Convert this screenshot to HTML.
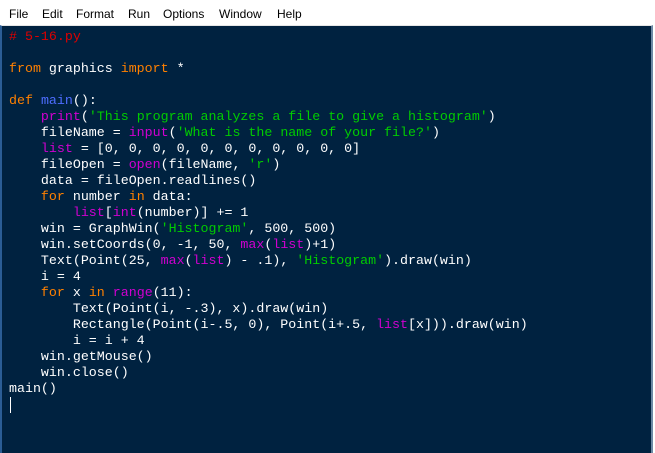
<!DOCTYPE html>
<html><head><style>
body{margin:0;width:655px;height:453px;overflow:hidden;background:#fff;position:relative}
.menu{position:absolute;top:0;left:0;width:655px;height:24px;background:#fff;font-family:"Liberation Sans",sans-serif;font-size:12px;color:#000}
.menu span{position:absolute;top:7px}
.ed{position:absolute;top:25px;left:0;width:653px;height:428px;background:#002240;border-top:1px solid #e6e6e6;border-right:2px solid #6d8aa5;border-left:2px solid #2b5d95;box-sizing:border-box}
pre{margin:0;position:absolute;left:7px;top:3px;font-family:"Liberation Mono",monospace;font-size:13.3px;line-height:16px;color:#fff}
.k{color:#ff8000}.s{color:#00cc00}.b{color:#d000d0}.c{color:#dd0000}.f{color:#4d6dff}
.cur{position:absolute;left:8px;top:371px;width:1px;height:16px;background:#fff}
</style></head><body>
<div class="menu"><span style="left:9px">File</span><span style="left:42px">Edit</span><span style="left:76px">Format</span><span style="left:128px">Run</span><span style="left:163px">Options</span><span style="left:219px">Window</span><span style="left:277px">Help</span></div>
<div class="ed"><pre><span class="c"># 5-16.py</span>

<span class="k">from</span> graphics <span class="k">import</span> *

<span class="k">def</span> <span class="f">main</span>():
    <span class="b">print</span>(<span class="s">'This program analyzes a file to give a histogram'</span>)
    fileName = <span class="b">input</span>(<span class="s">'What is the name of your file?'</span>)
    <span class="b">list</span> = [0, 0, 0, 0, 0, 0, 0, 0, 0, 0, 0]
    fileOpen = <span class="b">open</span>(fileName, <span class="s">'r'</span>)
    data = fileOpen.readlines()
    <span class="k">for</span> number <span class="k">in</span> data:
        <span class="b">list</span>[<span class="b">int</span>(number)] += 1
    win = GraphWin(<span class="s">'Histogram'</span>, 500, 500)
    win.setCoords(0, -1, 50, <span class="b">max</span>(<span class="b">list</span>)+1)
    Text(Point(25, <span class="b">max</span>(<span class="b">list</span>) - .1), <span class="s">'Histogram'</span>).draw(win)
    i = 4
    <span class="k">for</span> x <span class="k">in</span> <span class="b">range</span>(11):
        Text(Point(i, -.3), x).draw(win)
        Rectangle(Point(i-.5, 0), Point(i+.5, <span class="b">list</span>[x])).draw(win)
        i = i + 4
    win.getMouse()
    win.close()
main()</pre><div class="cur"></div></div>
</body></html>
